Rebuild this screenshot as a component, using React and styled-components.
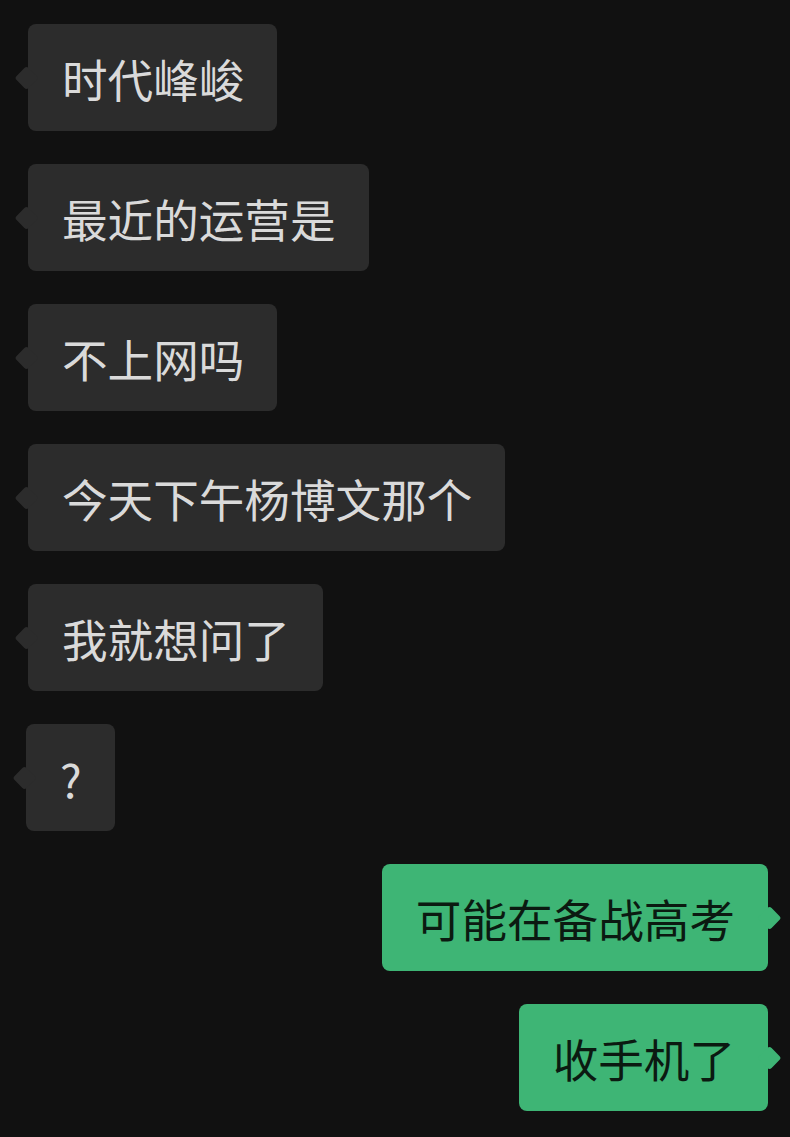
import React from "react";
import styled, { createGlobalStyle, css } from "styled-components";

const Global = createGlobalStyle`
  html, body { margin: 0; padding: 0; background: #111111; }
  body { font-family: "Noto Sans CJK SC", "Noto Sans", sans-serif; }
`;

const Screen = styled.div`
  width: 790px;
  height: 1137px;
  background: #111111;
  box-sizing: border-box;
  padding: 24px 22px 0 28px;
  display: flex;
  flex-direction: column;
  gap: 33px;
  overflow: hidden;
`;

const Row = styled.div`
  display: flex;
  justify-content: ${(p) => (p.$mine ? "flex-end" : "flex-start")};
  margin-left: ${(p) => p.$shift || 0}px;
`;

const Bubble = styled.div`
  position: relative;
  box-sizing: border-box;
  height: 107px;
  padding: 0 33px 0 34px;
  display: flex;
  align-items: center;
  border-radius: 8px;
  font-size: 45.6px;
  line-height: 57px;
  white-space: nowrap;
  ${(p) =>
    p.$mine
      ? css`
          background: #3eb575;
          color: #0b1a11;
        `
      : css`
          background: #2c2c2c;
          color: #dadada;
        `}

  &::before {
    content: "";
    position: absolute;
    top: 50%;
    width: 17px;
    height: 17px;
    border-radius: 3px;
    background: inherit;
    transform: translateY(-50%) rotate(45deg);
    ${(p) =>
      p.$mine
        ? css`
            right: -10px;
          `
        : css`
            left: -10px;
          `}
  }
`;

const Text = styled.span`
  position: relative;
  top: 1px;
`;

const messages = [
  { text: "时代峰峻" },
  { text: "最近的运营是" },
  { text: "不上网吗" },
  { text: "今天下午杨博文那个" },
  { text: "我就想问了" },
  { text: "?", shift: -2 },
  { text: "可能在备战高考", mine: true },
  { text: "收手机了", mine: true },
];

export default function App() {
  return (
    <>
      <Global />
      <Screen>
        {messages.map((m, i) => (
          <Row key={i} $mine={m.mine} $shift={m.shift}>
            <Bubble $mine={m.mine}>
              <Text>{m.text}</Text>
            </Bubble>
          </Row>
        ))}
      </Screen>
    </>
  );
}
